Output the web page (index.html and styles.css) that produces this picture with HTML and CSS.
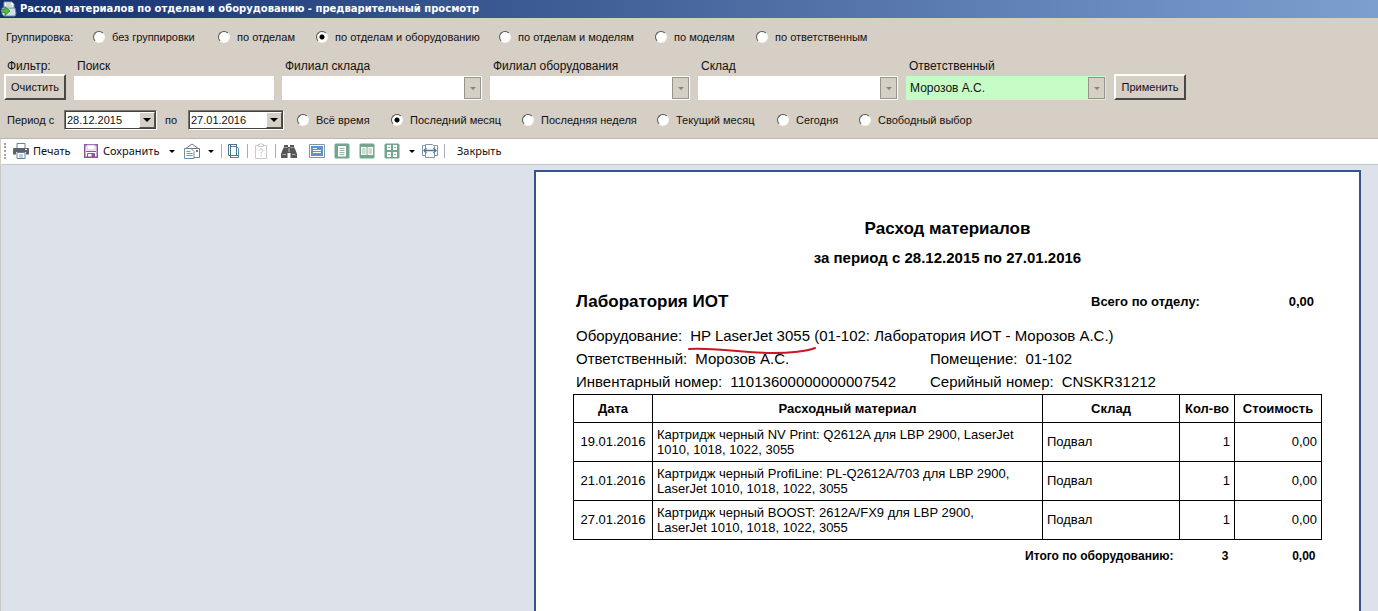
FILE: index.html
```
<!DOCTYPE html>
<html lang="ru">
<head>
<meta charset="utf-8">
<title>Расход материалов</title>
<link rel="stylesheet" href="styles.css">
</head>
<body>
<header class="titlebar">
  <svg class="app-icon" viewBox="0 0 16 16" aria-hidden="true"><path d="M3 1h8l2 2v5H3z" fill="#fff" stroke="#7f93a8"/><path d="M1 7h13l1 5-1 3H3l-2-2z" fill="#cfe0ee" stroke="#6f88a0"/><path d="M5 3h5M5 5h6" stroke="#9ab"/><path d="M0 8.500h4V5.500l5 4.500-5 4.500v-3H0z" fill="#55b93c" stroke="#2c7a22" stroke-width=".7"/></svg>
  <h1 class="titlebar-text">Расход материалов по отделам и оборудованию - предварительный просмотр</h1>
</header>

<form class="controls">
  <div class="group-row" role="radiogroup" aria-labelledby="grp">
    <span id="grp">Группировка:</span>
    <label class="radio"><input type="radio" name="group">без группировки</label>
    <label class="radio"><input type="radio" name="group">по отделам</label>
    <label class="radio"><input type="radio" name="group" checked>по отделам и оборудованию</label>
    <label class="radio"><input type="radio" name="group">по отделам и моделям</label>
    <label class="radio"><input type="radio" name="group">по моделям</label>
    <label class="radio"><input type="radio" name="group">по ответственным</label>
  </div>

  <div class="filter-row">
    <div class="field"><span class="field-label">Фильтр:</span><button type="button" class="btn">Очистить</button></div>
    <div class="field"><label class="field-label" for="q">Поиск</label><input class="box" id="q" type="text"></div>
    <div class="field"><label class="field-label" for="f1">Филиал склада</label><span class="combo"><select class="box" id="f1"><option></option></select></span></div>
    <div class="field"><label class="field-label" for="f2">Филиал оборудования</label><span class="combo"><select class="box" id="f2"><option></option></select></span></div>
    <div class="field"><label class="field-label" for="f3">Склад</label><span class="combo"><select class="box" id="f3"><option></option></select></span></div>
    <div class="field"><label class="field-label" for="f4">Ответственный</label><span class="combo"><select class="box filled" id="f4"><option>Морозов А.С.</option></select></span></div>
    <div class="field end"><button type="button" class="btn">Применить</button></div>
  </div>

  <div class="period-row">
    <label for="d1">Период с</label>
    <span class="date"><select id="d1"><option>28.12.2015</option></select></span>
    <label class="to" for="d2">по</label>
    <span class="date"><select id="d2"><option>27.01.2016</option></select></span>
    <label class="radio"><input type="radio" name="period">Всё время</label>
    <label class="radio"><input type="radio" name="period" checked>Последний месяц</label>
    <label class="radio"><input type="radio" name="period">Последняя неделя</label>
    <label class="radio"><input type="radio" name="period">Текущий месяц</label>
    <label class="radio"><input type="radio" name="period">Сегодня</label>
    <label class="radio"><input type="radio" name="period">Свободный выбор</label>
  </div>
</form>

<nav class="toolbar" aria-label="Панель инструментов">
  <span class="grip"></span>
  <button class="tool print"><svg viewBox="0 0 16 16"><path d="M4 5V.500h8V5" fill="#fff" stroke="#6a8298"/><path d="M1 5h14a1 1 0 0 1 1 1v5.500h-3V9H3v2.500H0V6a1 1 0 0 1 1-1z" fill="#5c6268"/><path d="M4 9.500h8v6H4z" fill="#fff" stroke="#6a8298"/><path d="M6 12h4M6 14h4" stroke="#7d9ab4"/><path d="M12 6.500h2" stroke="#fff"/></svg>Печать</button>
  <button class="tool save"><svg viewBox="0 0 16 16"><path d="M1.750 1.750h12.500v12.500H1.750z" fill="#fff" stroke="#8a55a5" stroke-width="1.500"/><path d="M4 2h8v5H4z" fill="#fff" stroke="#c9b0d6" stroke-width=".8"/><path d="M3 8.500h10" stroke="#8a55a5"/><path d="M4.500 10.500h7V14h-7z" fill="#fff" stroke="#8a55a5"/><path d="M8.500 11H11v3H8.500z" fill="#8a55a5"/></svg>Сохранить</button>
  <button class="tool drop" aria-label="Варианты сохранения"><span class="caret"></span></button>
  <button class="tool mail" aria-label="Отправить"><svg viewBox="0 0 16 16"><path d="M1 6l7-5 7 5" fill="none" stroke="#777"/><path d="M6 5.500h9.500v9H6" fill="#fff" stroke="#777"/><path d="M.500 5.500H7l3 3v7H.500z" fill="#fff" stroke="#6d8ca8"/><path d="M2.500 8.500h4M2.500 10.500h6M2.500 12.500h6" stroke="#6d9ac0"/><path d="M12 7h2v2h-2z" fill="#777"/></svg></button>
  <button class="tool drop" aria-label="Варианты отправки"><span class="caret"></span></button>
  <span class="sep"></span>
  <button class="tool setup" aria-label="Параметры страницы"><svg viewBox="0 0 16 16"><path d="M2.500 1.500h8v11h-8z" fill="#fff" stroke="#4f7390"/><path d="M4.500 3.500h6l2 2v9h-8z" fill="#fff" stroke="#4c8fb5"/><path d="M4.500 1v14M10.500 1v12M4.500 12.500h8" stroke="#4f7390" fill="none"/></svg></button>
  <span class="sep"></span>
  <button class="tool" aria-label="Свойства" disabled><svg viewBox="0 0 16 16"><path d="M2.500 2.500h11v13h-11z" fill="#fff" stroke="#c8c8c8"/><path d="M5.500 3.500v-2h1.500a1 1 0 0 1 2 0h1.500v2z" fill="#fff" stroke="#c8c8c8"/><path d="M6 7.500q0-1.500 2-1.500t2 1.500q0 1-1 1.500T8 10.500v.500M8 12v1.500" fill="none" stroke="#c4c4c4"/></svg></button>
  <span class="sep"></span>
  <button class="tool find" aria-label="Поиск"><svg viewBox="0 0 16 16"><path d="M3 2h4v2h2V2h4v2l1.500 3 1.500 4v4H9.500v-5h-3v5H0v-4l1.500-4L3 4z" fill="#555"/><path d="M3.500 4.500h3M9.500 4.500h3M1.500 11.500h3.500M11 11.500h3.500" stroke="#aaa"/><path d="M8 5v4" stroke="#bbb"/></svg></button>
  <button class="tool" aria-label="Во весь экран"><svg viewBox="0 0 16 16"><path d="M.500 1.500h15v13H.500z" fill="#fff" stroke="#7f95a8"/><path d="M2 3h12v10H2z" fill="#5f93cf"/><path d="M4 5.500h4M4 7.500h8M4 9.500h8" stroke="#fff"/></svg></button>
  <button class="tool" aria-label="Одна страница"><svg viewBox="0 0 16 16"><rect x=".500" y=".500" width="15" height="15" rx="1.500" fill="#74a590"/><path d="M4 3h8v10.500H4z" fill="#fff"/><path d="M5.500 5.500h5M5.500 7.500h5M5.500 9.500h5M5.500 11.500h5" stroke="#93b5a5"/></svg></button>
  <button class="tool" aria-label="Две страницы"><svg viewBox="0 0 16 16"><rect x=".500" y=".500" width="15" height="15" rx="1.500" fill="#74a590"/><path d="M2 4h5.500v8H2zM8.500 4H14v8H8.500z" fill="#fff"/><path d="M3 6h3.500M3 8h3.500M3 10h3.500M9.500 6H13M9.500 8H13M9.500 10H13" stroke="#93b5a5"/></svg></button>
  <button class="tool" aria-label="Несколько страниц"><svg viewBox="0 0 16 16"><rect x=".500" y=".500" width="15" height="15" rx="1.500" fill="#74a590"/><path d="M3 2h4v5H3zM9 2h4v5H9zM3 9h4v5H3zM9 9h4v5H9z" fill="#fff"/><path d="M4 4.500h2M10 4.500h2M4 11.500h2M10 11.500h2" stroke="#93b5a5"/></svg></button>
  <button class="tool drop pages" aria-label="Число страниц"><span class="caret"></span></button>
  <button class="tool" aria-label="По ширине"><svg viewBox="0 0 16 16"><path d="M.500 2.500h15v10H.500z" fill="#fff" stroke="#8298ac"/><path d="M3.500 1.500h7l2 2v11h-9z" fill="#fff" stroke="#8298ac"/><path d="M1 5h14v5H1z" fill="#fff"/><path d="M2 7.500h12M4.500 5L2 7.500 4.500 10M11.500 5L14 7.500 11.500 10" fill="none" stroke="#4d7896" stroke-width="1.400"/></svg></button>
  <span class="sep"></span>
  <button class="tool close">Закрыть</button>
</nav>

<main class="preview">
  <article class="sheet">
    <h2 class="report-title">Расход материалов</h2>
    <p class="report-period">за период с 28.12.2015 по 27.01.2016</p>
    <div class="department">
      <h3>Лаборатория ИОТ</h3>
      <span class="dept-label">Всего по отделу:</span>
      <span class="dept-sum">0,00</span>
    </div>
    <dl class="device">
      <div class="wide"><dt>Оборудование:</dt><dd><span class="marked">HP LaserJet 3055<svg class="mark" viewBox="0 0 128 8" aria-hidden="true"><path d="M1 2C24 0 52 6 84 6c18 0 32-1 43-5" fill="none" stroke="#cc1626" stroke-width="2" stroke-linecap="round"/></svg></span> (01-102: Лаборатория ИОТ - Морозов А.С.)</dd></div>
      <div><dt>Ответственный:</dt><dd>Морозов А.С.</dd></div>
      <div><dt>Помещение:</dt><dd>01-102</dd></div>
      <div><dt>Инвентарный номер:</dt><dd>11013600000000007542</dd></div>
      <div><dt>Серийный номер:</dt><dd>CNSKR31212</dd></div>
    </dl>
    <table class="items">
      <colgroup><col class="c-date"><col class="c-item"><col class="c-store"><col class="c-qty"><col class="c-cost"></colgroup>
      <thead><tr><th>Дата</th><th>Расходный материал</th><th>Склад</th><th>Кол-во</th><th>Стоимость</th></tr></thead>
      <tbody>
        <tr><td class="day">19.01.2016</td><td>Картридж черный NV Print: Q2612A для LBP 2900, LaserJet 1010, 1018, 1022, 3055</td><td>Подвал</td><td class="num">1</td><td class="num">0,00</td></tr>
        <tr><td class="day">21.01.2016</td><td>Картридж черный ProfiLine: PL-Q2612A/703 для LBP 2900, LaserJet 1010, 1018, 1022, 3055</td><td>Подвал</td><td class="num">1</td><td class="num">0,00</td></tr>
        <tr><td class="day">27.01.2016</td><td>Картридж черный BOOST: 2612A/FX9 для LBP 2900,<br>LaserJet 1010, 1018, 1022, 3055</td><td>Подвал</td><td class="num">1</td><td class="num">0,00</td></tr>
      </tbody>
      <tfoot><tr><td colspan="3">Итого по оборудованию:</td><td>3</td><td>0,00</td></tr></tfoot>
    </table>
  </article>
</main>
</body>
</html>
```
FILE: styles.css
```
*, *::before, *::after { box-sizing: border-box; }

body {
  margin: 0;
  min-height: 100vh;
  display: flex;
  flex-direction: column;
  overflow: hidden;
  background: #d5cfc6;
  color: #111;
  font: 12px/16px "Liberation Sans", Arial, sans-serif;
}

h1, h2, h3, p, dl, dd { margin: 0; }

button, select, input { font: inherit; color: inherit; }

/* Title bar */
.titlebar {
  display: flex;
  align-items: center;
  gap: 3px;
  height: 18px;
  padding-left: 1px;
  background: linear-gradient(to right, #14306e, #7c9fcf);
  color: #fff;
}
.app-icon { width: 16px; height: 16px; }
.titlebar-text { font: bold 10px/18px "DejaVu Sans", sans-serif; white-space: nowrap; }

/* Filter panel */
.controls { height: 121px; border-bottom: 1px solid #b9b8ae; white-space: nowrap; }

.group-row, .period-row, .btn { font-size: 11px; }

.group-row {
  display: grid;
  grid-template-columns: 87px 125px 98px 183px 156px 101px auto;
  align-items: center;
  height: 38px;
  padding-left: 6px;
}
.radio { display: flex; align-items: center; gap: 7px; }
.radio input {
  appearance: none;
  width: 12px;
  height: 12px;
  margin: 0;
  border: 1px solid;
  border-color: #55534f #f6f4f0 #f6f4f0 #55534f;
  border-radius: 50%;
  background: #fff;
}
.radio input:checked { background: radial-gradient(circle, #000 2px, #fff 3px); }

.filter-row {
  display: grid;
  grid-template-columns: 62px repeat(5, 200px) 72px;
  gap: 8px;
  padding-left: 4px;
}
.field { display: flex; flex-direction: column; height: 44px; }
.field.end { justify-content: flex-end; }
.field-label { height: 18px; padding-left: 3px; line-height: 20px; }
.btn {
  height: 26px;
  padding: 0;
  background: #d5cfc6;
  border: 2px solid;
  border-color: #fff #4a4845 #4a4845 #fff;
}
.box {
  width: 100%;
  height: 24px;
  padding: 0 4px;
  border: 0;
  border-radius: 0;
  background: #fff;
  appearance: none;
}
.box.filled { background: #c6fdc6; }
.field > .box, .combo { margin-top: 2px; }
.combo { position: relative; }
.combo::before {
  content: "";
  position: absolute;
  top: 1px;
  right: 1px;
  width: 17px;
  height: 22px;
  background: #d5cfc6;
  border: 1px solid #96938d;
  pointer-events: none;
}
.combo::after {
  content: "";
  position: absolute;
  top: 11px;
  right: 6px;
  border: 3px solid transparent;
  border-top-color: #85827c;
  border-bottom: 0;
  pointer-events: none;
}

.period-row {
  display: grid;
  grid-template-columns: 57px 92px 32px 109px 94px 131px 135px 120px 82px auto;
  align-items: center;
  height: 40px;
  padding-left: 7px;
}
.period-row .to { padding-left: 9px; }
.date {
  position: relative;
  width: 93px;
  height: 20px;
  border: 1px solid;
  border-color: #77746e #fff #fff #77746e;
}
.to + .date { width: 96px; }
.date select {
  display: block;
  appearance: none;
  width: 100%;
  height: 18px;
  padding: 0 1px;
  border: 1px solid #44423f;
  border-radius: 0;
  background: #fff;
}
.date::before {
  content: "";
  position: absolute;
  top: 1px;
  right: 1px;
  width: 16px;
  height: 16px;
  background: #d5cfc6;
  border: 1px solid;
  border-color: #fff #55534f #55534f #fff;
  pointer-events: none;
}
.date::after {
  content: "";
  position: absolute;
  top: 7px;
  right: 5px;
  border: 4px solid transparent;
  border-top-color: #000;
  border-bottom: 0;
  pointer-events: none;
}

/* Toolbar */
.toolbar {
  display: flex;
  align-items: center;
  height: 26px;
  margin-left: 1px;
  padding: 0 0 1px 3px;
  background: #fff;
  border-bottom: 1px solid #c3c7d0;
  font: 11px/16px "Noto Sans", sans-serif;
  white-space: nowrap;
}
.grip { width: 3px; height: 16px; border-left: 2px dotted #a5a5a5; }
.tool {
  display: flex;
  align-items: center;
  gap: 4px;
  padding: 0 5px 0 4px;
  border: 0;
  background: none;
}
.tool svg { flex: none; width: 16px; height: 16px; }
.tool.print { width: 71px; padding: 0 0 0 6px; }
.tool.save { width: 87px; padding: 0 0 0 5px; }
.tool.drop { width: 16px; padding: 0 4px; }
.tool.mail { padding: 0 4px 0 3px; }
.tool.setup { padding: 0 4px 0 3px; }
.tool.find { padding: 0 8px 0 4px; }
.tool.pages { width: 13px; padding: 0 4px; }
.tool.close { padding: 0 11px; }
.caret { border: 3px solid transparent; border-top-color: #000; border-bottom: 0; }
.sep { width: 1px; height: 14px; margin: 0 1px; background: #a9adb3; }

/* Preview pane */
.preview {
  flex: 1;
  display: flex;
  padding: 5px 17px 0 0;
  background: #dde1e9;
  border-left: 1px solid #c8c8c8;
}
.sheet {
  width: 827px;
  min-width: 0;
  margin-left: auto;
  padding: 45px 37px 0;
  background: #fff;
  border: 2px solid #34548a;
  border-bottom: 0;
  color: #000;
}
.report-title { font-size: 17px; line-height: 24px; text-align: center; }
.report-period { padding-top: 5px; font-size: 15px; font-weight: bold; line-height: 24px; text-align: center; }
.department {
  display: grid;
  grid-template-columns: 1fr 150px 73px;
  align-items: center;
  padding: 20px 8px 0 3px;
  font-size: 13px;
  font-weight: bold;
  line-height: 24px;
}
.department h3 { font-size: 17px; line-height: 24px; }
.dept-sum { text-align: right; }
.device {
  display: grid;
  grid-template-columns: 354px 1fr;
  padding: 10px 0 1px 3px;
  font-size: 15px;
  line-height: 23px;
}
.device div { display: flex; gap: 8px; white-space: nowrap; }
.device .wide { grid-column: 1 / -1; }
.marked { position: relative; }
.mark { position: absolute; top: 20px; left: -2px; width: 128px; height: 8px; }

.items {
  width: 100%;
  table-layout: fixed;
  border-collapse: collapse;
  font-size: 13px;
  line-height: 15px;
}
.c-date { width: 79px; }
.c-store { width: 137px; }
.c-qty { width: 55px; }
.c-cost { width: 87px; }
.items th, .items td { height: 39px; padding: 0 4px 1px; border: 1px solid #000; text-align: left; }
.items th { height: 28px; padding: 0; text-align: center; }
.items .day { text-align: center; }
.items .num { text-align: right; }
.items tfoot td { height: 32px; padding: 2px 6px 0; border: 0; border-top: 1px solid #000; font-size: 12px; font-weight: bold; text-align: right; }
```
